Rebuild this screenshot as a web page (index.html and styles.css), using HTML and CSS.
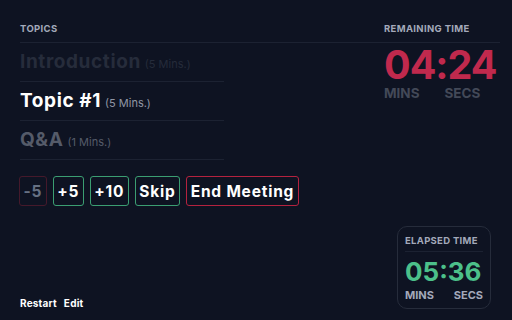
FILE: index.html
```html
<!DOCTYPE html>
<html lang="en">
<head>
<meta charset="utf-8">
<title>Meeting Timer</title>
<link rel="stylesheet" href="styles.css">
</head>
<body>
<div class="app">
  <div class="top">
    <section class="topics">
      <h2 class="label">Topics</h2>
      <ul class="topic-list">
        <li class="topic done"><span class="name">Introduction</span><span class="dur">(5 Mins.)</span></li>
        <li class="topic current"><span class="name">Topic #1</span><span class="dur">(5 Mins.)</span></li>
        <li class="topic upcoming"><span class="name">Q&amp;A</span><span class="dur">(1 Mins.)</span></li>
      </ul>
      <div class="controls">
        <button class="btn btn-disabled">-5</button>
        <button class="btn btn-green">+5</button>
        <button class="btn btn-green">+10</button>
        <button class="btn btn-green">Skip</button>
        <button class="btn btn-red">End Meeting</button>
      </div>
    </section>
    <section class="remaining">
      <h2 class="label">Remaining Time</h2>
      <div class="clock clock-red">04:24</div>
      <div class="units units-dim"><span>Mins</span><span>Secs</span></div>
    </section>
  </div>
  <div class="bottom">
    <nav class="links"><a href="#">Restart</a><a href="#">Edit</a></nav>
    <div class="elapsed">
      <h3 class="elapsed-label">Elapsed Time</h3>
      <div class="clock clock-green">05:36</div>
      <div class="units units-light"><span>Mins</span><span>Secs</span></div>
    </div>
  </div>
</div>
</body>
</html>
```

FILE: styles.css
```css
* { box-sizing: border-box; margin: 0; padding: 0; }
html, body { height: 100%; }
body {
  background: #0e1322;
  font-family: "Inter", "DejaVu Sans", sans-serif;
  color: #ffffff;
}
.app {
  height: 320px;
  display: flex;
  flex-direction: column;
}
.top {
  display: grid;
  grid-template-columns: 364px 116px;
  padding: 0 12px 0 20px;
}
.label {
  font-size: 9.5px;
  line-height: 12px;
  font-weight: 700;
  letter-spacing: 0.35px;
  text-transform: uppercase;
  color: #a3a9ba;
  padding: 23px 0 7px;
  border-bottom: 1px solid #1c2232;
}
.topic-list {
  list-style: none;
  width: 204px;
}
.topic {
  height: 39px;
  display: flex;
  align-items: baseline;
  gap: 4px;
  line-height: 38px;
  border-bottom: 1px solid #1c2232;
  white-space: nowrap;
}
.name {
  font-size: 19px;
  font-weight: 700;
  letter-spacing: 0.6px;
}
.dur {
  font-size: 11px;
  font-weight: 400;
}
.done .name { color: #262c3b; }
.done .dur { color: #252b3a; }
.current .name { color: #ffffff; }
.current .dur { color: #9096a4; }
.upcoming .name { color: #555b69; }
.upcoming .dur { color: #555b69; }

.controls {
  display: flex;
  gap: 6px;
  margin-top: 16px;
  margin-left: -1px;
}
.btn {
  height: 30px;
  padding: 0 3.5px;
  background: transparent;
  border: 1.5px solid;
  border-radius: 3px;
  font-family: inherit;
  font-size: 15.5px;
  font-weight: 700;
  letter-spacing: 0.8px;
  color: #ffffff;
}
.btn-disabled { border-color: #45192b; color: #667083; }
.btn-green { border-color: #3b9e72; }
.btn-red { border-color: #b4223f; }

.remaining .clock {
  margin-top: 3px;
}
.clock {
  font-weight: 700;
  line-height: 1;
}
.clock-red {
  font-size: 39.5px;
  color: #c0294d;
  letter-spacing: -1px;
}
.units {
  display: flex;
  font-weight: 700;
  text-transform: uppercase;
}
.units-dim {
  font-size: 13.5px;
  line-height: 14px;
  color: #434958;
  gap: 25px;
  margin-top: 0;
}
.units-light {
  font-size: 11px;
  color: #a3a9ba;
  justify-content: space-between;
  margin-top: 3px;
}

.bottom {
  margin-top: auto;
  display: flex;
  justify-content: space-between;
  align-items: flex-end;
  padding: 0 21px 11px 20px;
}
.links {
  display: flex;
  gap: 7px;
}
.links a {
  color: #ffffff;
  text-decoration: none;
  font-size: 10px;
  line-height: 12px;
  font-weight: 700;
  letter-spacing: 0.2px;
}
.elapsed {
  width: 94px;
  height: 83px;
  border: 1px solid #262c3b;
  border-radius: 10px;
  padding: 8px 7px 0;
}
.elapsed-label {
  font-size: 9.5px;
  line-height: 12px;
  font-weight: 700;
  letter-spacing: 0.3px;
  text-transform: uppercase;
  color: #a3a9ba;
  padding-bottom: 4px;
  border-bottom: 1px solid #1c2232;
}
.clock-green {
  font-size: 26px;
  color: #4cc08a;
  margin-top: 7px;
}
```
